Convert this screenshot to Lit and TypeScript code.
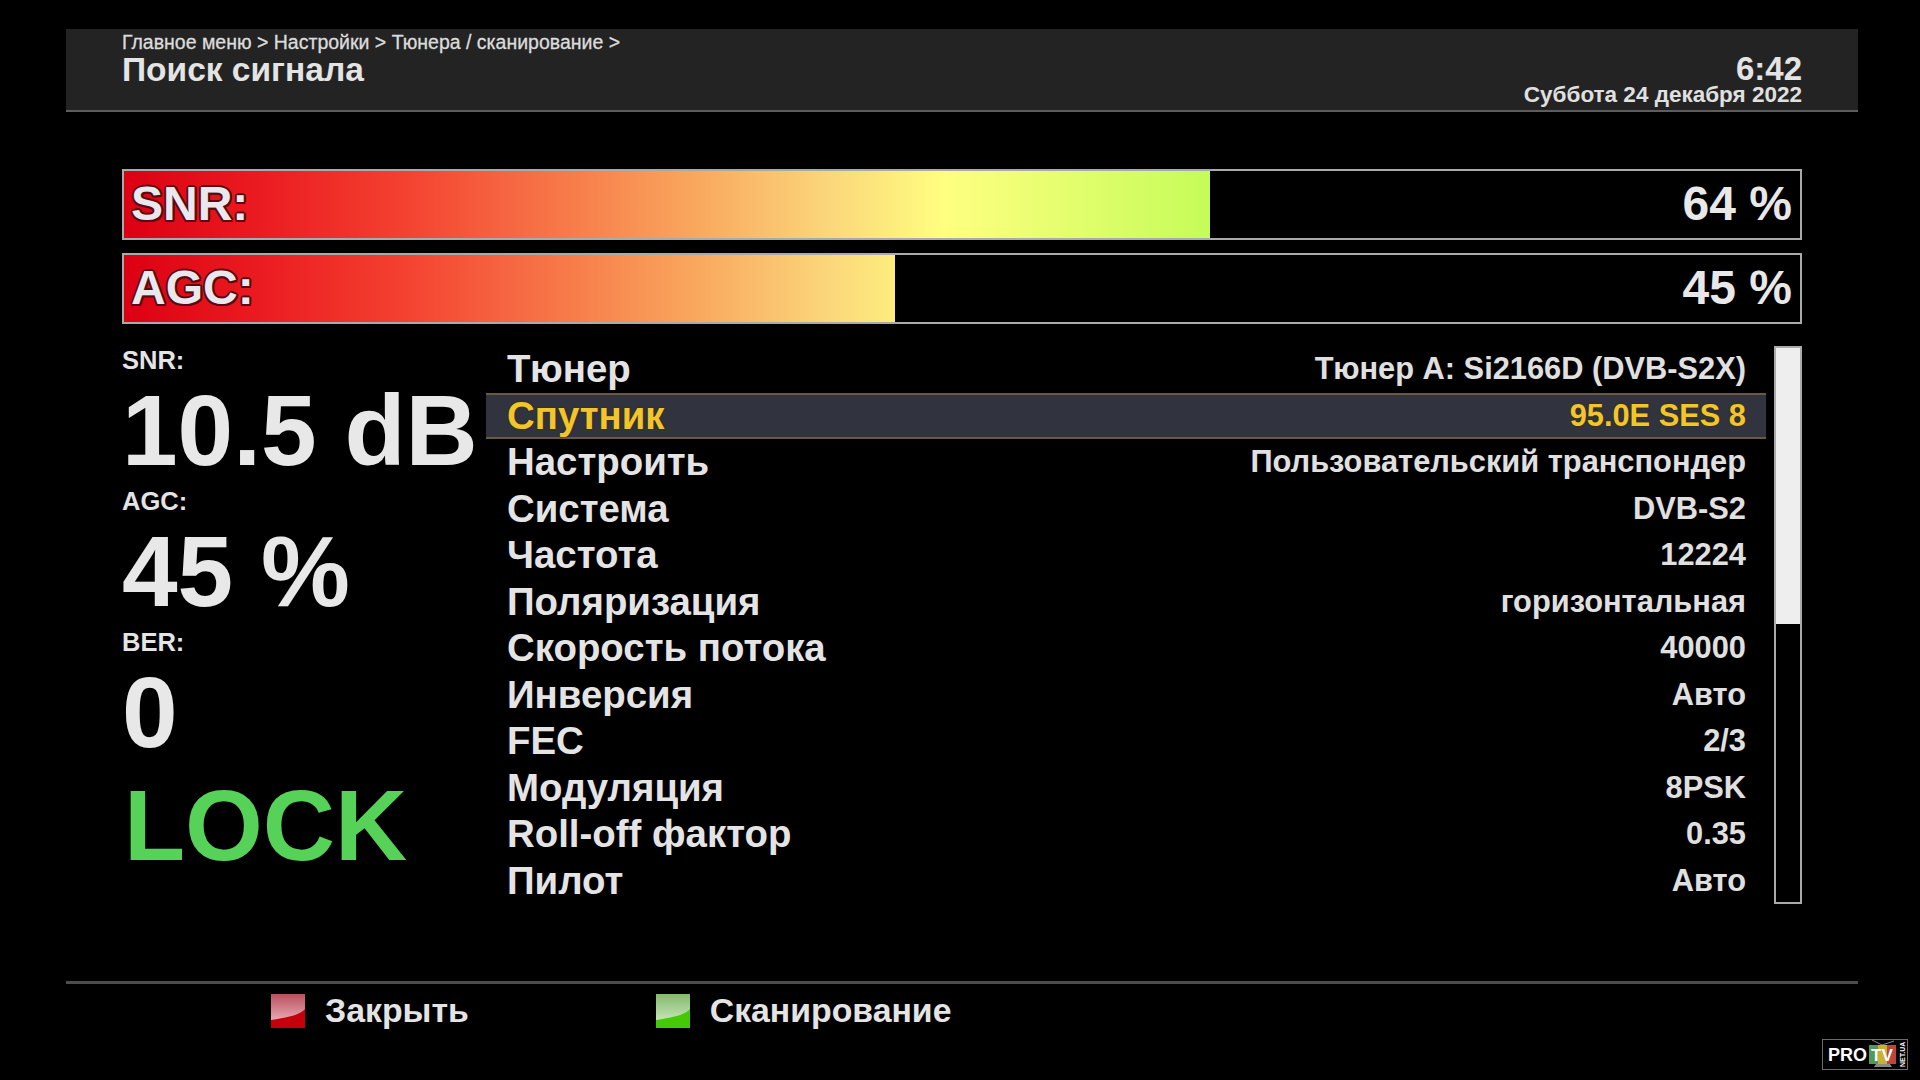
import { LitElement, html, css, svg } from "lit";
import { customElement } from "lit/decorators.js";

const ROWS: [string, string][] = [
  ["Тюнер", "Тюнер A: Si2166D (DVB-S2X)"],
  ["Спутник", "95.0E SES 8"],
  ["Настроить", "Пользовательский транспондер"],
  ["Система", "DVB-S2"],
  ["Частота", "12224"],
  ["Поляризация", "горизонтальная"],
  ["Скорость потока", "40000"],
  ["Инверсия", "Авто"],
  ["FEC", "2/3"],
  ["Модуляция", "8PSK"],
  ["Roll-off фактор", "0.35"],
  ["Пилот", "Авто"],
];

const BARS = [
  { label: "SNR:", value: 64.8, text: "64 %" },
  { label: "AGC:", value: 46, text: "45 %" },
];

@customElement("app-root")
export class AppRoot extends LitElement {
  static styles = css`
    :host {
      display: block;
      width: 1920px;
      height: 1080px;
      background: #000;
      color: #e8e8e8;
      font-family: "Liberation Sans", Arial, sans-serif;
      overflow: hidden;
      position: relative;
    }
    .page {
      display: flex;
      flex-direction: column;
      height: 100%;
      padding: 29px 62px 0 66px;
      box-sizing: border-box;
    }
    .header {
      height: 83px;
      box-sizing: border-box;
      background: #232323;
      border-bottom: 2px solid #5e5e5e;
      padding: 0 56px;
      display: flex;
      justify-content: space-between;
      flex-shrink: 0;
    }
    .crumbs {
      font-size: 19.5px;
      font-weight: 400;
      line-height: 20px;
      margin-top: 3px;
      color: #dcdcdc;
      -webkit-text-stroke: 0.3px #dcdcdc;
    }
    .title {
      font-size: 33.5px;
      font-weight: 700;
      line-height: 36px;
      color: #e4e4e4;
    }
    .clock {
      text-align: right;
      padding-top: 25px;
    }
    .time {
      font-size: 33px;
      font-weight: 700;
      line-height: 30px;
      color: #e4e4e4;
    }
    .date {
      font-size: 22.5px;
      font-weight: 700;
      line-height: 22px;
      color: #e0e0e0;
    }
    .bars {
      margin: 57px 56px 0;
      display: flex;
      flex-direction: column;
      gap: 13px;
      flex-shrink: 0;
    }
    .bar {
      height: 71px;
      box-sizing: border-box;
      border: 2px solid #aaa;
      display: flex;
      justify-content: space-between;
      align-items: center;
      padding: 0 8px 2px 7px;
      font-size: 48px;
      font-weight: 700;
      background-repeat: no-repeat;
      background-image: linear-gradient(
        90deg,
        #dc0012 0%,
        #ec1f22 9%,
        #f44030 16.5%,
        #f9a45c 33.5%,
        #fbd67a 42%,
        #ffff80 49%,
        #c4fc58 64.8%,
        #c4fc58 100%
      );
      position: relative;
    }
    .bar-mask {
      position: absolute;
      top: 0;
      bottom: 0;
      right: 0;
      background: #000;
    }
    .bar-label,
    .bar-text {
      position: relative;
    }
    .bar-label {
      color: #e8e8ee;
      text-shadow: -2px 0 #5a0b10, 2px 0 #5a0b10, 0 -2px #5a0b10, 0 2px #5a0b10,
        -1.5px -1.5px #5a0b10, 1.5px -1.5px #5a0b10, -1.5px 1.5px #5a0b10, 1.5px 1.5px #5a0b10;
    }
    .content {
      display: flex;
      margin: 22px 56px 0;
      height: 558px;
      flex-shrink: 0;
    }
    .stats {
      width: 364px;
      flex-shrink: 0;
      display: flex;
      flex-direction: column;
    }
    .stat-label {
      font-size: 25.5px;
      font-weight: 700;
      line-height: 28px;
      color: #e4e4e4;
    }
    .stat-value {
      font-size: 100px;
      font-weight: 700;
      line-height: 113px;
      height: 113px;
      white-space: nowrap;
      color: #e8e8e8;
    }
    .lock {
      font-size: 100px;
      font-weight: 700;
      line-height: 113px;
      color: #57d258;
      margin-top: 0;
      padding-left: 2px;
    }
    .list {
      flex: 1;
      display: flex;
      flex-direction: column;
      min-width: 0;
    }
    .row {
      height: 46.5px;
      box-sizing: border-box;
      padding: 0 20px 0 21px;
      display: flex;
      justify-content: space-between;
      align-items: center;
      flex-shrink: 0;
    }
    .row-label {
      font-size: 38.4px;
      font-weight: 700;
      color: #e4e4e4;
    }
    .row-value {
      font-size: 30.8px;
      font-weight: 700;
      color: #e0e0e0;
    }
    .row.sel {
      background: #31333f;
      border-top: 2px solid #6a5a40;
      border-bottom: 2px solid #6a5a40;
    }
    .row.sel .row-label,
    .row.sel .row-value {
      color: #f2c62a;
      text-shadow: 0 0 2px #3a2c08;
    }
    .scroll {
      width: 28px;
      box-sizing: border-box;
      border: 2px solid #aaa;
      margin-left: 8px;
      flex-shrink: 0;
      background: #000;
    }
    .thumb {
      height: 276px;
      background: #eeeeee;
    }
    .footer {
      margin-top: 77px;
      border-top: 3px solid #4c4c4c;
      display: flex;
      padding: 6px 0 0 205px;
      height: 40px;
    }
    .btn {
      display: flex;
      align-items: center;
      gap: 20px;
      font-size: 33.8px;
      font-weight: 700;
      color: #e4e4e4;
      height: 40px;
    }
    .btn + .btn {
      margin-left: 187px;
    }
    .key {
      width: 34px;
      height: 34px;
      display: block;
      flex-shrink: 0;
      margin-top: 2px;
    }
    .logo {
      position: absolute;
      left: 1822px;
      top: 1039px;
    }
    .logo text {
      font-family: "Liberation Sans", Arial, sans-serif;
      font-weight: 700;
    }
  `;

  private key(top: string, light: string, dark: string, id: string) {
    return html`<svg class="key" viewBox="0 0 34 34">
      ${svg`<defs><linearGradient id=${id} x1="0" y1="0" x2="0" y2="1">
        <stop offset="0" stop-color=${top}></stop>
        <stop offset="1" stop-color=${light}></stop>
      </linearGradient></defs>
      <rect width="34" height="34" fill=${dark}></rect>
      <path d="M0 0H34V15C28 22 12 24 0 26Z" fill="url(#${id})"></path>`}
    </svg>`;
  }

  render() {
    return html`<div class="page">
        <div class="header">
          <div>
            <div class="crumbs">Главное меню &gt; Настройки &gt; Тюнера / сканирование &gt;</div>
            <div class="title">Поиск сигнала</div>
          </div>
          <div class="clock">
            <div class="time">6:42</div>
            <div class="date">Суббота 24 декабря 2022</div>
          </div>
        </div>
        <div class="bars">
          ${BARS.map(
            (x) => html`<div class="bar">
              <div class="bar-mask" style="width:${100 - x.value}%"></div>
              <span class="bar-label">${x.label}</span>
              <span class="bar-text">${x.text}</span>
            </div>`
          )}
        </div>
        <div class="content">
          <div class="stats">
            <div class="stat-label">SNR:</div>
            <div class="stat-value">10.5 dB</div>
            <div class="stat-label">AGC:</div>
            <div class="stat-value">45 %</div>
            <div class="stat-label">BER:</div>
            <div class="stat-value">0</div>
            <div class="lock">LOCK</div>
          </div>
          <div class="list">
            ${ROWS.map(
              (r, i) => html`<div class="row ${i === 1 ? "sel" : ""}">
                <span class="row-label">${r[0]}</span>
                <span class="row-value">${r[1]}</span>
              </div>`
            )}
          </div>
          <div class="scroll"><div class="thumb"></div></div>
        </div>
        <div class="footer">
          <div class="btn">${this.key("#b8505e", "#e8a8b0", "#c4000c", "kr")}<span>Закрыть</span></div>
          <div class="btn">${this.key("#84b870", "#c4e4b4", "#44c808", "kg")}<span>Сканирование</span></div>
        </div>
      </div>
      <svg class="logo" width="86" height="31" viewBox="0 0 86 31">
        <rect x="0.5" y="0.5" width="85" height="30" fill="#000" stroke="#6c6c6c"></rect>
        <text x="6" y="22" font-size="18" fill="#fff">PRO</text>
        <path d="M60 6L50 1M60 6L72 2" stroke="#8a8a8a" stroke-width="1" fill="none"></path>
        <path d="M54 25H68L70 28H52Z" fill="#8a8a8a"></path>
        <rect x="47" y="6" width="27" height="19" fill="#c8b030"></rect>
        <rect x="47" y="6" width="9" height="19" fill="#4f9a5a"></rect>
        <rect x="65" y="6" width="9" height="19" fill="#c0443c"></rect>
        <text x="49" y="22" font-size="17" fill="#fff">TV</text>
        <text transform="translate(83 28) rotate(-90)" font-size="7" fill="#fff">NET.UA</text>
      </svg>`;
  }
}
